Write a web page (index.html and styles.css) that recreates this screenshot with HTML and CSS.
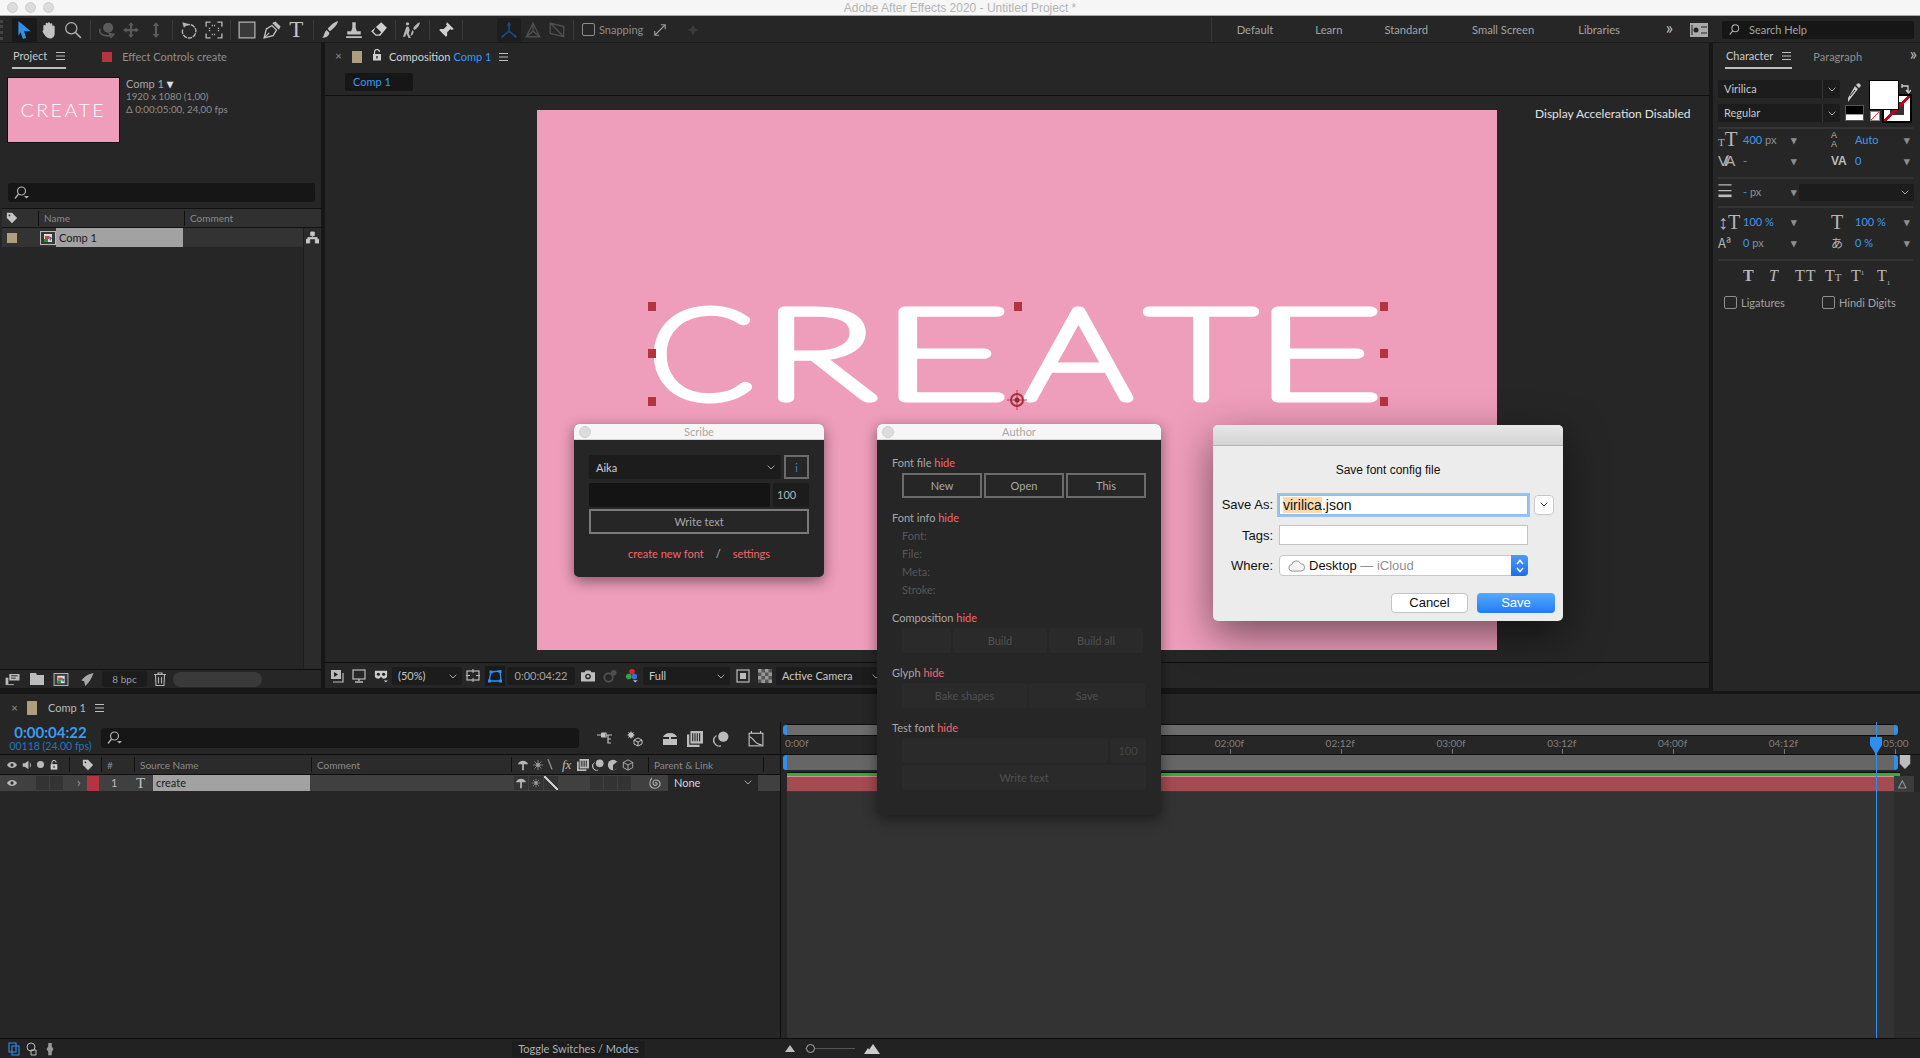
FILE: index.html
```html
<!DOCTYPE html>
<html lang="en">
<head>
<meta charset="utf-8">
<title>Adobe After Effects 2020 - Untitled Project *</title>
<link rel="stylesheet" href="styles.css">
</head>
<body>
<svg class="defs" aria-hidden="true">
  <symbol id="arrow" viewBox="0 0 16 16"><path d="M3 0l11 9H8l2 6-3 1-2-6-2 3z" fill="#2f8fee"/></symbol>
  <symbol id="hand" viewBox="0 0 16 16"><path d="M3 9V4.500a1 1 0 0 1 2 0V2.500a1 1 0 0 1 2 0V2a1 1 0 0 1 2 0v1a1 1 0 0 1 2 0v2a1 1 0 0 1 2 0v6c0 3-2 4.500-4 4.500-3 0-4-2-6.500-5.500-.8-1.200.5-2.200 1.500-1.500z" fill="#c2c2c2"/></symbol>
  <symbol id="zoom" viewBox="0 0 16 16"><circle cx="6.500" cy="6.500" r="5" fill="none" stroke="#b5b5b5" stroke-width="1.100"/><path d="M10 10l5 5" stroke="#b5b5b5" stroke-width="1.300"/></symbol>
  <symbol id="orbit" viewBox="0 0 16 16"><circle cx="9" cy="6" r="4.500" fill="#5a5a5a"/><path d="M2 7c-2 4 3 7 9 6l-1-2 4 1-3 3" fill="none" stroke="#5a5a5a" stroke-width="1.400"/></symbol>
  <symbol id="move" viewBox="0 0 16 16"><path d="M8 1l2.500 3H9v3h3V5.500L15 8l-3 2.500V9H9v3h1.500L8 15l-2.500-3H7V9H4v1.500L1 8l3-2.500V7h3V4H5.500z" fill="#5a5a5a"/></symbol>
  <symbol id="dolly" viewBox="0 0 16 16"><path d="M8 1l3 3.500H9v7h2L8 15l-3-3.500h2v-7H5z" fill="#5a5a5a"/></symbol>
  <symbol id="rotate" viewBox="0 0 16 16"><path d="M5 4a6 6 0 1 1-2.500 3" fill="none" stroke="#b5b5b5" stroke-width="1.200" stroke-dasharray="4 .8"/><path d="M2 1l5 1.500-3.500 3.500z" fill="#b5b5b5"/></symbol>
  <symbol id="region" viewBox="0 0 16 16"><path d="M1 5V1h4M11 1h4v4M15 11v4h-4M5 15H1v-4" fill="none" stroke="#b5b5b5" stroke-width="1.200"/><path d="M6 4h4M6 12h4M4 6v4M12 6v4" stroke="#b5b5b5" stroke-width="1.200" stroke-dasharray="1 1"/></symbol>
  <symbol id="rect" viewBox="0 0 16 16"><rect x="1" y="1" width="14" height="14" fill="#3a3a3a" stroke="#b5b5b5" stroke-width="1.100"/></symbol>
  <symbol id="pen" viewBox="0 0 16 16"><path d="M1 15l2-8 5-3 4 4-3 5z" fill="none" stroke="#c0c0c0" stroke-width="1.200"/><path d="M9 2l2-1 4 4-1 2zM1 15l4.500-4.500" fill="#c0c0c0" stroke="#c0c0c0"/></symbol>
  <symbol id="brush" viewBox="0 0 16 16"><path d="M15 0c0 3-4 7-7 9L6 7c2-3 6-6 9-7zM5 8l2.500 2.500C7 14 4 15 1 15c2-1 1.500-5 4-7z" fill="#c0c0c0"/></symbol>
  <symbol id="stamp" viewBox="0 0 16 16"><path d="M6.500 1h3v5l1 3H14v3H2V9h3.500l1-3zM1 13.500h14V15H1z" fill="#c0c0c0"/></symbol>
  <symbol id="eraser" viewBox="0 0 16 16"><path d="M10 1l5 5-6 7H5L1 9z" fill="#d0d0d0"/><path d="M5 5l5 5-2 2H5.500L3 9.500z" fill="#262626"/></symbol>
  <symbol id="puppet" viewBox="0 0 16 16"><circle cx="4" cy="2.500" r="1.500" fill="#b5b5b5"/><path d="M3 5l2 0 1 3-1 3 2 4H5l-2-4 .5-2L2 14H0l2-6zM15 1c0 3-3 6-5 7L9 6.500c1.500-2.500 4-5 6-5.500zM8.500 8l1 1.500C9 12 8 13 6.500 13c1-1 .5-3 2-5z" fill="#b5b5b5"/></symbol>
  <symbol id="pin" viewBox="0 0 16 16"><path d="M9 1l6 6-2 1-1-1-3 3 0 3-1 1-3-3-4 4 4-4-3-3 1-1 3 0 3-3-1-1z" fill="#d0d0d0"/></symbol>
  <symbol id="axis" viewBox="0 0 16 16"><path d="M8 1v8M8 9l-6 5M8 9l6 5" stroke="currentColor" stroke-width="1.400" fill="none"/><path d="M8 1l-2 3h4zM1 15l1-3 2 2zM15 15l-3-1 2-2z" fill="currentColor"/></symbol>
  <symbol id="axis2" viewBox="0 0 16 16"><path d="M8 2l6 12H2zM8 2v7M2 14l6-5 6 5" stroke="currentColor" stroke-width="1.200" fill="none"/></symbol>
  <symbol id="axis3" viewBox="0 0 16 16"><path d="M2 2l12 3v9L2 11zM2 2l12 12" stroke="currentColor" stroke-width="1.200" fill="none"/></symbol>
  <symbol id="snap1" viewBox="0 0 16 16"><path d="M2 14L14 2M9 2h5v5M2 9v5h5" stroke="#9a9a9a" stroke-width="1.300" fill="none"/></symbol>
  <symbol id="snap2" viewBox="0 0 16 16"><path d="M8 2l2 4 4 2-4 2-2 4-2-4-4-2 4-2z" fill="#3c3c3c"/></symbol>
  <symbol id="menu" viewBox="0 0 9 8"><path d="M0 .5h9M0 4h9M0 7.500h9" stroke="#bdbdbd" stroke-width="1"/></symbol>
  <symbol id="lock" viewBox="0 0 10 12"><path d="M2.500 5V3a2.500 2.500 0 0 1 5 0" fill="none" stroke="#d0d0d0" stroke-width="1.200"/><rect x="1" y="5" width="8" height="6.500" fill="#d0d0d0"/><rect x="4.300" y="7" width="1.400" height="2.500" fill="#262626"/></symbol>
  <symbol id="search" viewBox="0 0 16 14"><circle cx="7.500" cy="5" r="4" fill="none" stroke="#b0b0b0" stroke-width="1.200"/><path d="M4.500 8L1 12.500" stroke="#b0b0b0" stroke-width="1.300"/><path d="M10 10h5l-2.500 2.500z" fill="#b0b0b0"/></symbol>
  <symbol id="searchp" viewBox="0 0 14 14"><circle cx="8.500" cy="5" r="4" fill="none" stroke="#b0b0b0" stroke-width="1.200"/><path d="M5.500 8L2 12.500" stroke="#b0b0b0" stroke-width="1.300"/></symbol>
  <symbol id="tag" viewBox="0 0 14 14"><path d="M1 1h6l6 6-6 6-6-6z" fill="#c4c4c4"/><circle cx="4" cy="4" r="1" fill="#2e2e2e"/></symbol>
  <symbol id="flow" viewBox="0 0 14 14"><path d="M5 1h4v4H5zM0 9h4v4H0zM10 9h4v4h-4zM7 5v2M2 9V7h10v2" fill="#c8c8c8" stroke="#c8c8c8" stroke-width=".800"/></symbol>
  <symbol id="compic" viewBox="0 0 16 14"><rect x=".500" y=".500" width="15" height="13" fill="#3a3a3a" stroke="#bbb"/><rect x="4" y="3" width="8" height="8" fill="#ddd"/><path d="M5 5h4v3H5z" fill="#c43"/><path d="M9 5l3 2-2 3z" fill="#2364c4"/><path d="M4 8h4v3H4z" fill="#2a8f3a"/></symbol>
  <symbol id="interp" viewBox="0 0 16 14"><path d="M0 5h3v7H0zM4 1h11v7H4z" fill="#bbb"/><path d="M6 3h7M6 5.500h5M0 13h10" stroke="#262626" stroke-width="1"/><path d="M0 12.500h9" stroke="#bbb"/></symbol>
  <symbol id="folder" viewBox="0 0 14 12"><path d="M0 2V0h6l1 2h7v10H0z" fill="#bcbcbc"/></symbol>
  <symbol id="rocket" viewBox="0 0 14 14"><path d="M14 0C9 1 5 3 1 8l3 1 1 5c4-3 7-8 9-14z" fill="#a8a8a8"/></symbol>
  <symbol id="trash" viewBox="0 0 12 14"><path d="M0 2.500h12M4 2.500V1h4v1.500M1.500 3l.5 10.500h8L10.500 3M4.500 5v6.500M7.500 5v6.500" fill="none" stroke="#b5b5b5" stroke-width="1.100"/></symbol>
  <symbol id="prev" viewBox="0 0 14 14"><rect x="1" y="1" width="10" height="9" fill="#bbb"/><path d="M4 3l4 2.500L4 8z" fill="#222"/><path d="M13 4v9H3" fill="none" stroke="#bbb" stroke-width="1.200"/></symbol>
  <symbol id="monitor" viewBox="0 0 14 14"><rect x="1" y="1" width="12" height="9" fill="none" stroke="#bbb" stroke-width="1.200"/><path d="M7 10v2M3 13h8" stroke="#bbb" stroke-width="1.400"/></symbol>
  <symbol id="mask" viewBox="0 0 16 14"><path d="M1 1h14v6c0 2-2 3-4 3-1.500 0-2-2-3-2s-1.500 2-3 2c-2 0-4-1-4-3z" fill="#ccc"/><circle cx="5" cy="5" r="1.800" fill="#222"/><circle cx="11" cy="5" r="1.800" fill="#222"/><path d="M11 12h5l-2.500 2z" fill="#ccc"/></symbol>
  <symbol id="safe" viewBox="0 0 14 14"><rect x="1" y="2" width="12" height="9" fill="none" stroke="#bbb" stroke-width="1.200"/><path d="M7 0v4M7 9v4M0 6.500h4M10 6.500h4" stroke="#bbb"/></symbol>
  <symbol id="maskb" viewBox="0 0 14 14"><path d="M3 3l9-1 1 10H1z" fill="none" stroke="#2f8fee" stroke-width="1.300"/><rect x="1.500" y="1.500" width="3" height="3" fill="#2f8fee"/><rect x="10.500" y="1" width="3" height="3" fill="#2f8fee"/><rect x="0" y="10.500" width="3" height="3" fill="#2f8fee"/><rect x="11" y="10.500" width="3" height="3" fill="#2f8fee"/></symbol>
  <symbol id="camera" viewBox="0 0 15 12"><path d="M0 2h4l1-2h5l1 2h4v10H0z" fill="#bdbdbd"/><circle cx="7.500" cy="6.500" r="3" fill="#262626"/><circle cx="7.500" cy="6.500" r="1.500" fill="#bdbdbd"/></symbol>
  <symbol id="camdim" viewBox="0 0 15 14"><circle cx="6" cy="8.500" r="4.500" fill="none" stroke="#4f4f4f" stroke-width="2"/><circle cx="11.500" cy="3.500" r="3" fill="#4f4f4f"/></symbol>
  <symbol id="rgb" viewBox="0 0 14 15"><circle cx="7" cy="3" r="3" fill="#e0202a"/><circle cx="3.500" cy="8" r="3" fill="#2fa83a"/><circle cx="9.500" cy="8" r="3" fill="#2f6fe8"/><path d="M8 12h5l-2.500 2.500z" fill="#bbb"/></symbol>
  <symbol id="frame" viewBox="0 0 14 14"><rect x="1" y="1" width="12" height="12" fill="none" stroke="#bbb" stroke-width="1.200"/><rect x="4" y="4" width="6" height="6" fill="#bbb"/></symbol>
  <symbol id="checker" viewBox="0 0 14 14"><rect width="14" height="14" fill="#555"/><path d="M0 0h3.500v3.500H0zM7 0h3.500v3.500H7zM3.500 3.500H7V7H3.500zM10.500 3.500H14V7h-3.500zM0 7h3.500v3.500H0zM7 7h3.500v3.500H7zM3.500 10.500H7V14H3.500zM10.500 10.500H14V14h-3.500z" fill="#999"/></symbol>
  <symbol id="chev" viewBox="0 0 8 5"><path d="M.7.7L4 4l3.300-3.300" fill="none" stroke="currentColor" stroke-width="1"/></symbol>
  <symbol id="eye" viewBox="0 0 14 10"><path d="M0 5c3-5.500 11-5.500 14 0-3 5.500-11 5.500-14 0z" fill="#bbb"/><circle cx="7" cy="5" r="2.300" fill="#2e2e2e"/></symbol>
  <symbol id="speaker" viewBox="0 0 12 14"><path d="M0 4.500h3L8 1v12L3 9.500H0zM10 3c2 2 2 6 0 8" fill="#bbb"/></symbol>
  <symbol id="ttree" viewBox="0 0 16 14"><path d="M0 3h5M5 1h4v4H5zM9 3h6M11 3v8h3M11 7h3" stroke="#c0c0c0" stroke-width="1.200" fill="none"/><rect x="4" y="1" width="4" height="4" fill="#c0c0c0"/></symbol>
  <symbol id="draft" viewBox="0 0 16 16"><path d="M4 0l1 2 2-1-1 2 2 1-2 1 1 2-2-1-1 2-1-2-2 1 1-2-2-1 2-1-1-2 2 1z" fill="#c0c0c0"/><path d="M11 7l4 2v4l-4 2-4-2V9zM7 9l4 2 4-2M11 11v4" fill="none" stroke="#c0c0c0"/></symbol>
  <symbol id="shy" viewBox="0 0 16 14"><path d="M8 1c4 0 6 2 7 4H9v2h6v6H1V7h6V5H1c1-2 3-4 7-4z" fill="#c0c0c0"/></symbol>
  <symbol id="film" viewBox="0 0 14 14"><rect x="3" y="0" width="11" height="11" fill="#bbb"/><path d="M5 2v7M7 2v7M9 2v7M11 2v7" stroke="#2a2a2a"/><rect x="0" y="3" width="2" height="11" fill="#bbb"/><rect x="0" y="12" width="11" height="2" fill="#bbb"/></symbol>
  <symbol id="motion" viewBox="0 0 14 14"><circle cx="9" cy="5" r="4.500" fill="#bbb"/><path d="M3 4a5 5 0 0 0 4 9M1 6a5 5 0 0 0 3 7" fill="none" stroke="#bbb"/></symbol>
  <symbol id="graph" viewBox="0 0 14 14"><rect x="1" y="2" width="12" height="11" fill="none" stroke="#c0c0c0"/><path d="M1 5c4 0 4 7 11 7M3 0v2M11 0v2" stroke="#c0c0c0" fill="none"/></symbol>
  <symbol id="half" viewBox="0 0 14 14"><circle cx="7" cy="7" r="6" fill="#bbb"/><path d="M7 7l5-4a6 6 0 0 1-5 10z" fill="#2e2e2e"/></symbol>
  <symbol id="cube" viewBox="0 0 14 14"><path d="M7 1l5.500 3v6L7 13l-5.500-3V4zM1.500 4L7 7l5.500-3M7 7v6" fill="none" stroke="#bbb"/></symbol>
  <symbol id="star" viewBox="0 0 12 12"><path d="M6 1v10M1 6h10M2.500 2.500l7 7M9.500 2.500l-7 7" stroke="#999" stroke-width=".8"/><circle cx="6" cy="6" r="2" fill="#999"/></symbol>
  <symbol id="spiral" viewBox="0 0 14 14"><path d="M7 7c1-1 2 0 2 1 0 2-4 2-4-1 0-4 6-4 7 0 1 4-4 6-7 5C1 11 1 5 4 2" fill="none" stroke="#aaa" stroke-width="1.100"/></symbol>
  <symbol id="cloud" viewBox="0 0 18 14"><path d="M4.500 13a3.500 3.500 0 0 1-.5-7 5 5 0 0 1 9.500-1 4 4 0 0 1 .5 8z" fill="#f5f5f5" stroke="#8f8f8f"/></symbol>
  <symbol id="updn" viewBox="0 0 8 14"><path d="M1 5l3-3.500L7 5M1 9l3 3.500L7 9" fill="none" stroke="#fff" stroke-width="1.500"/></symbol>
  <symbol id="drop" viewBox="0 0 14 20"><path d="M13 1c1 1 1 2 0 3l-1 1-3-3 1-1c1-1 2-1 3 0zM8 3l3 3-7 9-3 4 0-4z" fill="#c8c8c8"/><path d="M3 13l5-6" stroke="#262626"/></symbol>
  <symbol id="swap" viewBox="0 0 10 12"><path d="M1 3h6v6M5 7l2.500 3L10 7M1 1v4" fill="none" stroke="#ccc" stroke-width="1.300"/></symbol>
  <symbol id="lines" viewBox="0 0 15 16"><path d="M0 1h15M0 7.500h15" stroke="#bbb" stroke-width="1.500"/><path d="M0 12h15v3H0z" fill="#bbb"/></symbol>
  <symbol id="panel-ic" viewBox="0 0 18 14"><rect width="18" height="14" fill="#aaa"/><circle cx="6" cy="7" r="2.500" fill="#222"/><path d="M11 4h6M11 10h6M2 2v10" stroke="#222"/></symbol>
  <symbol id="mt" viewBox="0 0 14 12"><path d="M7 1C4 1 2 3 1 5h5v7h2V5h5c-1-2-3-4-6-4z" fill="#b5b5b5"/></symbol>
  <symbol id="anchor" viewBox="0 0 20 20"><path d="M10 0v20M0 10h20" stroke="#c43a3a"/><circle cx="10" cy="10" r="6" fill="none" stroke="#a8323c" stroke-width="2"/><circle cx="10" cy="10" r="2.500" fill="#8a2a33"/></symbol>
  <symbol id="togl1" viewBox="0 0 12 14"><path d="M1 1h7v9H1zM4 4h7v9H4z" fill="none" stroke="#2f8fee" stroke-width="1.100"/></symbol>
  <symbol id="togl2" viewBox="0 0 12 14"><circle cx="5" cy="5" r="4" fill="none" stroke="#bbb"/><path d="M5 8h5v5H5z" fill="none" stroke="#bbb"/></symbol>
  <symbol id="togl3" viewBox="0 0 12 16"><path d="M4 1h4v4l2 3-2 3v4H4v-4L2 8l2-3z" fill="#999"/></symbol>
  <symbol id="mount1" viewBox="0 0 12 8"><path d="M6 0l5 7H1z" fill="#bbb"/></symbol>
  <symbol id="mount2" viewBox="0 0 16 10"><path d="M9 0l7 10H2zM4 4l4 6H0z" fill="#ccc"/></symbol>
  <symbol id="marker" viewBox="0 0 12 16"><path d="M0 0h12v10l-6 6-6-6z" fill="#bcbcbc"/></symbol>
  <symbol id="head" viewBox="0 0 12 18"><path d="M0 0h12v8l-5 8v2H5v-2L0 8z" fill="#2f8fee"/></symbol>
</svg>

<div class="app">
  <header class="titlebar">
    <div class="lights"><i class="light"></i><i class="light"></i><i class="light"></i></div>
    <span class="title">Adobe After Effects 2020 - Untitled Project *</span>
  </header>

  <nav class="toolbar">
    <span class="grip"></span>
    <span class="tool active"><svg class="ic16"><use href="#arrow"/></svg></span>
    <span class="tool"><svg class="ic16"><use href="#hand"/></svg></span>
    <span class="tool"><svg class="ic16"><use href="#zoom"/></svg></span>
    <span class="tsep"></span>
    <span class="tool"><svg class="ic16"><use href="#orbit"/></svg></span>
    <span class="tool"><svg class="ic16"><use href="#move"/></svg></span>
    <span class="tool"><svg class="ic16"><use href="#dolly"/></svg></span>
    <span class="tsep"></span>
    <span class="tool"><svg class="ic16"><use href="#rotate"/></svg></span>
    <span class="tool"><svg class="ic16"><use href="#region"/></svg></span>
    <span class="tsep"></span>
    <span class="tool"><svg class="ic16"><use href="#rect"/></svg></span>
    <span class="tool"><svg class="ic16"><use href="#pen"/></svg></span>
    <span class="tool tool-t">T</span>
    <span class="tsep"></span>
    <span class="tool"><svg class="ic16"><use href="#brush"/></svg></span>
    <span class="tool"><svg class="ic16"><use href="#stamp"/></svg></span>
    <span class="tool"><svg class="ic16"><use href="#eraser"/></svg></span>
    <span class="tsep"></span>
    <span class="tool"><svg class="ic16"><use href="#puppet"/></svg></span>
    <span class="tsep"></span>
    <span class="tool"><svg class="ic16"><use href="#pin"/></svg></span>
    <span class="tsep tsep-wide"></span>
    <span class="tool axis axis-on"><svg class="ic16"><use href="#axis"/></svg></span>
    <span class="tool axis"><svg class="ic16"><use href="#axis2"/></svg></span>
    <span class="tool axis"><svg class="ic16"><use href="#axis3"/></svg></span>
    <span class="tsep"></span>
    <label class="check snap"><i class="box"></i>Snapping</label>
    <span class="tool snapic"><svg class="ic14"><use href="#snap1"/></svg></span>
    <span class="tool snapic"><svg class="ic14"><use href="#snap2"/></svg></span>
    <span class="spacer"></span>
    <span class="workspaces">
      <span class="ws ws-default">Default</span>
      <span class="ws ws-learn">Learn</span>
      <span class="ws ws-standard">Standard</span>
      <span class="ws ws-small">Small Screen</span>
      <span class="ws ws-lib">Libraries</span>
    </span>
    <span class="more">»</span>
    <svg class="panelic"><use href="#panel-ic"/></svg>
    <span class="helpbox"><svg class="ic12"><use href="#searchp"/></svg>Search Help</span>
  </nav>

  <main class="panels">
    <section class="panel project">
      <div class="tabs">
        <span class="tab on">Project <svg class="menu"><use href="#menu"/></svg></span>
        <span class="swatch red"></span>
        <span class="tab dim">Effect Controls create</span>
      </div>
      <div class="meta">
        <div class="thumb"><span class="thumbtext">CREATE</span></div>
        <div class="metatext">
          <p class="metaname">Comp 1 <b class="tri">▾</b></p>
          <p>1920 x 1080 (1,00)</p>
          <p>Δ 0:00:05:00, 24,00 fps</p>
        </div>
      </div>
      <div class="search projsearch"><svg class="ic-s"><use href="#search"/></svg></div>
      <div class="listhead">
        <svg class="ic12 tagic"><use href="#tag"/></svg>
        <span class="cell cell-name">Name</span>
        <span class="cell cell-comment">Comment</span>
      </div>
      <div class="listbody">
        <div class="listcol">
          <div class="listrow">
            <span class="swatch tan rowsw"></span>
            <svg class="compic"><use href="#compic"/></svg>
            <span class="namecell">Comp 1</span>
          </div>
        </div>
        <div class="listscroll"><svg class="ic12 flowic"><use href="#flow"/></svg></div>
      </div>
      <div class="projfoot">
        <svg class="fi fi-a"><use href="#interp"/></svg>
        <svg class="fi fi-b"><use href="#folder"/></svg>
        <svg class="fi fi-c"><use href="#compic"/></svg>
        <svg class="fi fi-d"><use href="#rocket"/></svg>
        <span class="bpc">8 bpc</span>
        <svg class="fi fi-e"><use href="#trash"/></svg>
        <span class="pill"></span>
      </div>
    </section>

    <section class="panel comp">
      <div class="tabs comptabs">
        <span class="x">×</span>
        <span class="swatch tan"></span>
        <svg class="lockic"><use href="#lock"/></svg>
        <span class="tab bright">Composition <em class="blue">Comp 1</em></span>
        <svg class="menu"><use href="#menu"/></svg>
      </div>
      <div class="subtabs"><span class="subtab">Comp 1</span></div>
      <div class="viewer">
        <div class="canvas">
          <svg class="art" viewBox="0 0 960 540"><text class="arttext" y="288"><tspan x="112" textLength="104" lengthAdjust="spacingAndGlyphs">C</tspan><tspan x="226" textLength="112" lengthAdjust="spacingAndGlyphs">R</tspan><tspan x="344" textLength="128" lengthAdjust="spacingAndGlyphs">E</tspan><tspan x="489" textLength="105" lengthAdjust="spacingAndGlyphs">A</tspan><tspan x="610" textLength="108" lengthAdjust="spacingAndGlyphs">T</tspan><tspan x="717" textLength="128" lengthAdjust="spacingAndGlyphs">E</tspan></text></svg>
          <i class="handle h-tl"></i><i class="handle h-tm"></i><i class="handle h-tr"></i>
          <i class="handle h-ml"></i><i class="handle h-mr"></i>
          <i class="handle h-bl"></i><i class="handle h-br"></i>
          <svg class="anchorpt"><use href="#anchor"/></svg>
        </div>
        <p class="accel">Display Acceleration Disabled</p>
      </div>
      <div class="viewbar">
        <span class="vslot"><svg class="ic14"><use href="#prev"/></svg></span>
        <span class="vslot"><svg class="ic14"><use href="#monitor"/></svg></span>
        <span class="vslot"><svg class="ic14"><use href="#mask"/></svg></span>
        <span class="vsel vsel-zoom">(50%)<svg class="chev"><use href="#chev"/></svg></span>
        <span class="vslot"><svg class="ic14"><use href="#safe"/></svg></span>
        <span class="vblue"><svg class="ic14"><use href="#maskb"/></svg></span>
        <span class="vtime">0:00:04:22</span>
        <span class="vslot"><svg class="ic14"><use href="#camera"/></svg></span>
        <span class="vslot"><svg class="ic14"><use href="#camdim"/></svg></span>
        <span class="vslot"><svg class="ic14"><use href="#rgb"/></svg></span>
        <span class="vsel vsel-full">Full<svg class="chev"><use href="#chev"/></svg></span>
        <span class="vslot"><svg class="ic14"><use href="#frame"/></svg></span>
        <span class="vslot"><svg class="ic14"><use href="#checker"/></svg></span>
        <span class="vsel vsel-cam">Active Camera<svg class="chev"><use href="#chev"/></svg></span>
      </div>
    </section>

    <section class="panel char">
      <div class="tabs chartabs">
        <span class="tab on">Character <svg class="menu"><use href="#menu"/></svg></span>
        <span class="tab dim para">Paragraph</span>
        <span class="more charmore">»</span>
      </div>
      <div class="fontblock">
        <div class="fontsels">
          <span class="fsel">Virilica<i class="fchev"><svg class="chev"><use href="#chev"/></svg></i></span>
          <span class="fsel">Regular<i class="fchev"><svg class="chev"><use href="#chev"/></svg></i></span>
        </div>
        <div class="colorbox">
          <svg class="dropper"><use href="#drop"/></svg>
          <span class="bw"></span>
          <span class="none-s"></span>
          <span class="strokebox"></span>
          <span class="fillbox"></span>
          <svg class="swapic"><use href="#swap"/></svg>
        </div>
      </div>
      <hr class="rule rule-a">
      <div class="mrow">
        <span class="metric"><span class="mi tt"><small>T</small>T</span><span class="mv"><em class="blue">400</em> px</span><b class="dn">▾</b></span>
        <span class="metric mr"><span class="mi lead">A<br>A</span><span class="mv"><em class="blue">Auto</em></span><b class="dn">▾</b></span>
      </div>
      <div class="mrow">
        <span class="metric"><span class="mi va">V/A</span><span class="mv">-</span><b class="dn">▾</b></span>
        <span class="metric mr"><span class="mi vab">VA</span><span class="mv"><em class="blue">0</em></span><b class="dn">▾</b></span>
      </div>
      <hr class="rule rule-b">
      <div class="mrow mrow-s">
        <span class="metric"><span class="mi"><svg class="ic14"><use href="#lines"/></svg></span><span class="mv"><em class="blue">-</em> px</span><b class="dn">▾</b></span>
        <span class="strokesel"><svg class="chev"><use href="#chev"/></svg></span>
      </div>
      <hr class="rule rule-c">
      <div class="mrow">
        <span class="metric"><span class="mi tb">↕T</span><span class="mv"><em class="blue">100 %</em></span><b class="dn">▾</b></span>
        <span class="metric mr"><span class="mi tb">T</span><span class="mv"><em class="blue">100 %</em></span><b class="dn">▾</b></span>
      </div>
      <div class="mrow">
        <span class="metric"><span class="mi aa">Aª</span><span class="mv"><em class="blue">0</em> px</span><b class="dn">▾</b></span>
        <span class="metric mr"><span class="mi aa">あ</span><span class="mv"><em class="blue">0 %</em></span><b class="dn">▾</b></span>
      </div>
      <hr class="rule rule-d">
      <div class="styles">
        <span class="sty bold">T</span><span class="sty ital">T</span><span class="sty caps">TT</span><span class="sty smc">T<small>T</small></span><span class="sty">T<sup>1</sup></span><span class="sty">T<sub>1</sub></span>
      </div>
      <div class="checks">
        <label class="check lig"><i class="box"></i>Ligatures</label>
        <label class="check"><i class="box"></i>Hindi Digits</label>
      </div>
    </section>
  </main>

  <section class="timeline">
    <div class="tl-tabs">
      <span class="x">×</span>
      <span class="swatch tan"></span>
      <span class="tab">Comp 1</span>
      <svg class="menu"><use href="#menu"/></svg>
    </div>
    <div class="tl-body">
      <div class="tl-left">
        <div class="tl-ctrl">
          <div class="tc"><span class="tc-time">0:00:04:22</span><span class="tc-frames">00118 (24.00 fps)</span></div>
          <div class="search tlsearch"><svg class="ic-s"><use href="#search"/></svg></div>
          <span class="tlic tlic-a"><svg class="ic16"><use href="#ttree"/></svg></span>
          <span class="tlic tlic-b"><svg class="ic16"><use href="#draft"/></svg></span>
          <span class="tlic tlic-c"><svg class="ic16"><use href="#shy"/></svg></span>
          <span class="tlic tlic-d"><svg class="ic16"><use href="#film"/></svg></span>
          <span class="tlic tlic-e"><svg class="ic16"><use href="#motion"/></svg></span>
          <span class="tlic tlic-f"><svg class="ic16"><use href="#graph"/></svg></span>
        </div>
        <div class="tl-head">
          <span class="col c-av"><svg class="ic10 sp"><use href="#eye"/></svg><svg class="ic10 sp"><use href="#speaker"/></svg><i class="dot"></i><svg class="ic10"><use href="#lock"/></svg></span>
          <span class="col c-tag"><svg class="ic12"><use href="#tag"/></svg></span>
          <span class="col c-num">#</span>
          <span class="col c-src">Source Name</span>
          <span class="col c-com">Comment</span>
          <span class="col c-sw">
            <svg class="ic12 swi"><use href="#mt"/></svg><svg class="ic12 swi"><use href="#star"/></svg><span class="swi sl">\</span><span class="swi fx">fx</span><svg class="ic12 swi"><use href="#film"/></svg><svg class="ic12 swi"><use href="#motion"/></svg><svg class="ic12 swi"><use href="#half"/></svg><svg class="ic12 swi"><use href="#cube"/></svg>
          </span>
          <span class="col c-par">Parent &amp; Link</span>
        </div>
        <div class="tl-row">
          <span class="r-av"><svg class="ic10"><use href="#eye"/></svg><i class="sq"></i><i class="sq"></i></span>
          <span class="r-chev">›</span>
          <span class="swatch red r-sw"></span>
          <span class="r-num">1</span>
          <span class="r-t">T</span>
          <span class="r-name">create</span>
          <span class="r-sws"><i class="sw-a"><svg class="ic12"><use href="#mt"/></svg></i><i class="sw-a"><svg class="ic10"><use href="#star"/></svg></i><i class="sw-a sl2"></i></span>
          <span class="r-sq"><i class="sq"></i><i class="sq"></i><i class="sq"></i></span>
          <svg class="ic14 r-sp"><use href="#spiral"/></svg>
          <span class="r-none">None<svg class="chev"><use href="#chev"/></svg></span>
        </div>
        <div class="tl-empty"></div>
      </div>
      <div class="tl-right">
        <div class="nav"><i class="nub nub-l"></i><span class="navbar"></span><i class="nub nub-r"></i></div>
        <div class="ruler">
          <span class="rl rl-0">0:00f</span>
          <span class="rl">02:00f</span>
          <span class="rl">02:12f</span>
          <span class="rl">03:00f</span>
          <span class="rl">03:12f</span>
          <span class="rl">04:00f</span>
          <span class="rl">04:12f</span>
          <span class="rl rl-e">05:00</span>
        </div>
        <div class="work"><i class="nub nub-l"></i><span class="workbar"></span><i class="nub nub-r"></i><svg class="markic"><use href="#marker"/></svg></div>
        <div class="green"></div>
        <div class="layerline"><span class="layerbar"></span><span class="layerend"><i class="fold">△</i></span></div>
        <div class="tl-lower"><span class="lowerend"></span></div>
        <span class="playhead"><svg class="headic"><use href="#head"/></svg></span>
      </div>
    </div>
    <footer class="tl-foot">
      <svg class="ic14 ft1"><use href="#togl1"/></svg>
      <svg class="ic14 ft2"><use href="#togl2"/></svg>
      <svg class="ic14 ft2"><use href="#togl3"/></svg>
      <span class="toggle">Toggle Switches / Modes</span>
      <svg class="mnt1"><use href="#mount1"/></svg>
      <span class="zoomslide"><i class="knob"></i></span>
      <svg class="mnt2"><use href="#mount2"/></svg>
    </footer>
  </section>
</div>

<div class="win scribe">
  <div class="wtitle"><i class="wlight"></i>Scribe</div>
  <div class="scribe-body">
    <div class="srow">
      <span class="ssel">Aika<svg class="chev"><use href="#chev"/></svg></span>
      <span class="sbtn-i">i</span>
    </div>
    <div class="srow">
      <span class="sinput"></span>
      <span class="snum">100</span>
    </div>
    <div class="sbtn">Write text</div>
    <p class="slinks"><a class="hide">create new font</a><span class="slash">/</span><a class="hide">settings</a></p>
  </div>
</div>

<div class="win author">
  <div class="wtitle"><i class="wlight"></i>Author</div>
  <div class="author-body">
    <p class="ah">Font file <a class="hide">hide</a></p>
    <div class="arow"><span class="abtn">New</span><span class="abtn">Open</span><span class="abtn">This</span></div>
    <p class="ah ah-info">Font info <a class="hide">hide</a></p>
    <p class="ainfo">Font:</p>
    <p class="ainfo">File:</p>
    <p class="ainfo">Meta:</p>
    <p class="ainfo">Stroke:</p>
    <p class="ah ah-comp">Composition <a class="hide">hide</a></p>
    <div class="arow arow-d"><span class="adis a-w1"></span><span class="adis a-w2">Build</span><span class="adis a-w2">Build all</span></div>
    <p class="ah ah-next">Glyph <a class="hide">hide</a></p>
    <div class="arow arow-d"><span class="adis a-w3">Bake shapes</span><span class="adis a-w4">Save</span></div>
    <p class="ah ah-next">Test font <a class="hide">hide</a></p>
    <div class="arow arow-d"><span class="adis a-w5"></span><span class="adis a-w6">100</span></div>
    <div class="arow arow-d arow-t"><span class="adis a-w7">Write text</span></div>
  </div>
</div>

<div class="dialog">
  <div class="dtitle"></div>
  <p class="dhead">Save font config file</p>
  <div class="dform">
    <span class="dlabel">Save As:</span>
    <span class="dfield focus"><mark class="sel">virilica</mark>.json</span>
    <span class="dexpand"><svg class="chev"><use href="#chev"/></svg></span>
    <span class="dlabel">Tags:</span>
    <span class="dfield"></span>
    <span></span>
    <span class="dlabel">Where:</span>
    <span class="dpopup"><svg class="cloud"><use href="#cloud"/></svg>Desktop<span class="dgray"> — iCloud</span><i class="dstep"><svg class="updn"><use href="#updn"/></svg></i></span>
    <span></span>
  </div>
  <div class="dbtns"><span class="dbtn">Cancel</span><span class="dbtn primary">Save</span></div>
</div>
</body>
</html>
```

FILE: styles.css
```css
* { box-sizing: border-box; }
html, body { margin: 0; height: 100%; overflow: hidden; }
body { position: relative; width: 1920px; height: 1058px; background: #161616; color: #a3a3a3; font: 11px/1.2 Lato, "Open Sans", sans-serif; }
p { margin: 0; }
em { font-style: normal; }
i, b { font-style: normal; }
.defs { position: absolute; width: 0; height: 0; }
.blue { color: #3a9bf0; }
.app { display: flex; flex-direction: column; width: 1920px; height: 1058px; }

/* title bar */
.titlebar { position: relative; flex: 0 0 16px; background: #f6f6f6; border-bottom: 1px solid #a9a9a9; display: flex; align-items: center; justify-content: center; }
.lights { position: absolute; left: 7px; top: 2px; display: flex; gap: 7px; }
.light { width: 11px; height: 11px; border-radius: 50%; background: #dcdcdc; border: 1px solid #cfcfcf; }
.title { color: #b4b4b4; font: 12px "Liberation Sans", sans-serif; }

/* toolbar */
.toolbar { flex: 0 0 26px; display: flex; align-items: center; padding-top: 1px; background: #262626; border-bottom: 1px solid #1a1a1a; }
.grip { width: 12px; height: 20px; border-left: 3px dotted #444; }
.tool { width: 24.500px; height: 24px; display: flex; align-items: center; justify-content: center; color: #b5b5b5; }
.tool .ic16 { width: 18px; height: 18px; }
.tool.active { background: #1a1a1a; border-radius: 2px; }
.tool-t { font: 23px/24px "Liberation Serif", serif; color: #c4c4c4; }
.tsep { width: 9px; height: 24px; position: relative; }
.tsep::after { content: ""; position: absolute; left: 4px; top: 2px; width: 1px; height: 20px; background: #383838; }
.tsep-wide { width: 39px; }
.ic16 { width: 16px; height: 16px; }
.ic14 { width: 14px; height: 14px; }
.ic12 { width: 12px; height: 12px; }
.ic10 { width: 10px; height: 10px; }
.axis { color: #4f4f4f; width: 24px; }
.axis-on { color: #1d4c80; background: #1e1e1e; border-radius: 2px; }
.check { display: inline-flex; align-items: center; gap: 4px; color: #a3a3a3; }
.box { width: 13px; height: 13px; border: 1.500px solid #8d8d8d; border-radius: 2px; }
.snap { margin-left: 4px; color: #8d8d8d; }
.snapic { width: 33px; }
.spacer { flex: 1; }
.workspaces { display: flex; align-self: stretch; align-items: center; width: 455px; height: 25px; border-left: 1px solid #383838; font-size: 11.200px; }
.ws { color: #a3a3a3; }
.ws-default { margin-left: 25px; }
.ws-learn { margin-left: 42px; }
.ws-standard { margin-left: 42px; }
.ws-small { margin-left: 44px; }
.ws-lib { margin-left: 44px; }
.more { color: #c0c0c0; font-size: 17px; line-height: 14px; }
.toolbar > .more { margin-right: 17px; margin-top: -4px; }
.panelic { width: 18px; height: 14px; margin-right: 14px; }
.helpbox { display: flex; align-items: center; gap: 9px; width: 192px; height: 18px; margin-right: 6px; padding-left: 6px; background: #161616; border-radius: 2px; color: #a3a3a3; }

/* panels */
.panels { flex: 0 0 648px; display: grid; grid-template-columns: 321px 1fr 207px; column-gap: 4px; background: #161616; }
.panel { background: #262626; display: flex; flex-direction: column; min-height: 0; }
.project, .comp { border-bottom: 3px solid #161616; }
.tabs { flex: 0 0 29px; display: flex; align-items: center; position: relative; padding-bottom: 2px; }
.tab { display: inline-flex; align-items: center; gap: 9px; }
.tab.on { color: #c8c8c8; height: 25px; border-bottom: 2px solid #bdbdbd; padding: 0 1px; margin-left: 12px; }
.tab.dim { color: #8f8f8f; }
.tab.bright { color: #d2d2d2; gap: 3px; }
.menu { width: 9px; height: 8px; }
.swatch { display: inline-block; width: 10px; height: 10px; }
.swatch.red { background: #b5343f; }
.swatch.tan { background: #ad9f7e; }
.project .tabs .swatch { margin-left: 36px; margin-right: 10px; }

.meta { flex: 0 0 72px; display: flex; padding: 5px 0 0 7px; }
.thumb { width: 113px; height: 66px; background: #ee9dba; border: 1px solid #111; display: flex; align-items: center; justify-content: center; }
.thumbtext { color: #fff; font: 300 17px/1 Lato, sans-serif; letter-spacing: 2.200px; transform: scaleX(1.150); }
.metatext { margin-left: 6px; color: #8f8f8f; line-height: 13px; font-size: 9.800px; }
.metaname { color: #a8a8a8; font-size: 11px; }
.tri { color: #e0e0e0; font-size: 12px; }

.search { background: #161616; border-radius: 3px; display: flex; align-items: center; }
.ic-s { width: 16px; height: 14px; margin-left: 6px; }
.projsearch { height: 19px; margin: 39px 6px 6px 8px; }
.listhead { flex: 0 0 20px; margin-left: 2px; display: flex; align-items: center; background: #303030; border-top: 1px solid #111; border-bottom: 1px solid #111; color: #8a8a8a; font-size: 10px; }
.tagic { margin-left: 4px; }
.cell { border-left: 1px solid #111; height: 15px; line-height: 15px; padding-left: 5px; }
.cell-name { margin-left: 20px; width: 146px; }
.cell-comment { width: 130px; padding-left: 5px; }
.listbody { flex: 1; display: flex; min-height: 0; }
.listcol { flex: 1; }
.listrow { height: 19px; margin-left: 2px; background: #333; display: flex; align-items: center; }
.rowsw { margin-left: 5px; }
.compic { width: 16px; height: 14px; margin-left: 23px; }
.namecell { width: 127px; height: 19px; padding-left: 3px; line-height: 19px; color: #1a1a1a; background: #a2a2a2; }
.listscroll { width: 18px; border-left: 1px solid #1e1e1e; background: #2b2b2b; display: flex; justify-content: center; padding-top: 3px; }
.flowic { width: 13px; height: 13px; }
.projfoot { flex: 0 0 19px; display: flex; align-items: center; border-top: 1px solid #0e0e0e; }
.fi { width: 16px; height: 13px; }
.fi-a { margin-left: 5px; }
.fi-b { margin-left: 9px; width: 14px; height: 12px; }
.fi-c { margin-left: 9px; }
.fi-d { margin-left: 10px; }
.bpc { margin-left: 7px; width: 45px; height: 16px; line-height: 16px; text-align: center; background: #1c1c1c; border-radius: 3px; color: #9a9a9a; font-size: 10px; }
.fi-e { margin-left: 7px; width: 12px; height: 14px; }
.pill { margin-left: 7px; width: 89px; height: 15px; background: #3a3a3a; border-radius: 8px; }

/* comp panel */
.comptabs .x { margin-left: 10px; }
.x { color: #8a8a8a; font-size: 12px; width: 14px; }
.comptabs .swatch { margin-left: 3px; height: 12px; }
.lockic { width: 10px; height: 12px; margin: -3px 7px 0 10px; }
.comptabs .menu { margin-left: 8px; }
.subtabs { flex: 0 0 24px; padding-left: 20px; border-bottom: 1px solid #0e0e0e; }
.subtab { display: block; width: 68px; height: 18px; line-height: 18px; padding-left: 8px; margin-top: 1px; color: #3a9bf0; background: #161616; border-radius: 2px; }
.viewer { flex: 0 0 567px; display: flex; align-items: flex-start; padding: 11px 0 0 212px; border-bottom: 1px solid #0e0e0e; }
.canvas { position: relative; flex: 0 0 960px; height: 540px; margin-top: 3px; background: #ee9dba; }
.art { position: absolute; left: 0; top: 0; width: 960px; height: 540px; }
.arttext { font: 100 124px Lato, sans-serif; fill: #fff; stroke: #fff; stroke-width: 9px; stroke-linejoin: round; }
.handle { position: absolute; width: 8px; height: 9px; background: #b4343e; }
.h-tl { left: 111px; top: 192px; }
.h-tm { left: 477px; top: 192px; }
.h-tr { left: 843px; top: 192px; }
.h-ml { left: 111px; top: 239px; }
.h-mr { left: 843px; top: 239px; }
.h-bl { left: 111px; top: 287px; }
.h-br { left: 843px; top: 287px; }
.anchorpt { position: absolute; left: 470px; top: 280px; width: 20px; height: 20px; }
.accel { margin: 0 0 0 38px; color: #e2e2e2; font-size: 12px; white-space: nowrap; }
.viewbar { flex: 1; display: flex; align-items: center; padding-left: 1px; }
.vslot { width: 22px; display: flex; justify-content: center; }
.vsel { position: relative; height: 18px; line-height: 18px; padding-left: 6px; background: #1c1c1c; border-radius: 2px; color: #c8c8c8; }
.vsel .chev { position: absolute; right: 5px; top: 7px; }
.chev { width: 8px; height: 5px; color: #a8a8a8; }
.vsel-zoom { width: 70px; }
.vblue { width: 20px; height: 20px; background: #1a1a1a; display: flex; align-items: center; justify-content: center; margin-left: 1px; }
.vtime { width: 68px; height: 18px; line-height: 18px; margin: 0 2px; text-align: center; background: #1c1c1c; border-radius: 2px; color: #a3a3a3; }
.vsel-full { width: 87px; margin-right: 2px; }
.vsel-cam { width: 109px; }

/* character */
.chartabs .tab.on { margin-left: 12px; }
.para { margin-left: 21px; }
.charmore { position: absolute; right: 3px; top: 4px; }
.fontblock { display: flex; padding: 8px 0 0 5px; flex: 0 0 55px; }
.fontsels { display: flex; flex-direction: column; gap: 6px; }
.fsel { position: relative; width: 122px; height: 18px; line-height: 18px; padding-left: 6px; background: #1c1c1c; border-radius: 2px; color: #c8c8c8; }
.fchev { position: absolute; right: 0; top: 0; width: 18px; height: 18px; border-left: 1px solid #333; display: flex; align-items: center; justify-content: center; }
.colorbox { position: relative; flex: 1; }
.dropper { position: absolute; left: 7px; top: 3px; width: 14px; height: 20px; }
.bw { position: absolute; left: 5px; top: 25px; width: 19px; height: 16px; background: linear-gradient(#000 0 55%, #999 55% 65%, #fff 65%); border: 1px solid #555; }
.none-s { position: absolute; left: 30px; top: 31px; width: 10px; height: 10px; background: linear-gradient(135deg, #fff 44%, #d33 44% 56%, #fff 56%); border: 1px solid #888; }
.strokebox { position: absolute; left: 42px; top: 14px; width: 30px; height: 29px; background: linear-gradient(135deg, #fff 46%, #c4001a 46% 54%, #fff 54%); border: 2px solid #000; }
.strokebox::after { content: ""; position: absolute; left: 6px; top: 6px; width: 14px; height: 13px; background: linear-gradient(135deg, #333 42%, #c4001a 42% 58%, #333 58%); }
.fillbox { position: absolute; left: 29px; top: 0; width: 30px; height: 30px; background: #fff; border: 1px solid #000; }
.swapic { position: absolute; left: 61px; top: 3px; width: 10px; height: 12px; }
.rule { flex: none; width: 195px; height: 2px; margin: 0 0 0 5px; border: 0; background: #333; }
.rule-b { margin-top: 6px; margin-bottom: 3.500px; }
.rule-c { margin-top: 4.500px; margin-bottom: 3px; }
.rule-d { margin-top: 6px; }
.mrow { display: flex; align-items: center; height: 21px; padding-left: 5px; }
.mrow-s { height: 19px; }
.metric { display: flex; align-items: center; width: 104px; }
.metric.mr { width: 96px; }
.mi { width: 25px; color: #b5b5b5; font: 15px/1 "Liberation Serif", serif; flex: none; }
.mr .mi { width: 33px; padding-left: 9px; }
.mv { width: 48px; color: #8f8f8f; flex: none; }
.mr .mv { width: 49px; }
.dn { color: #8f8f8f; font-size: 11px; }
.tt { font-size: 21px; }
.tt small { font-size: 11px; }
.tb { font-size: 20px; }
.lead { font: 9px/9px "Liberation Sans", sans-serif; }
.va { font: 15px/1 "Liberation Sans", sans-serif; letter-spacing: -3.500px; }
.vab { font: bold 12px/1 "Liberation Sans", sans-serif; }
.mi.vab { color: #bbb; }
.aa { font: 13px/1 "Noto Sans CJK JP", sans-serif; }
.mr .aa { font-size: 12px; }
.strokesel { display: flex; align-items: center; justify-content: flex-end; width: 115px; height: 17px; margin-left: -23px; padding-right: 5px; background: #1c1c1c; border-radius: 2px; }
.styles { flex: 0 0 30px; display: flex; align-items: center; padding-left: 30px; color: #b8b8b8; font: 16px/1 "Liberation Serif", serif; }
.sty { width: 26px; }
.sty small { font-size: 11px; }
.sty sup, .sty sub { font-size: 7px; line-height: 0; }
.bold { font-weight: 700; }
.ital { font-style: italic; }
.caps { letter-spacing: 1px; width: 30px; }
.checks { display: flex; padding: 5px 0 0 11px; color: #909090; }
.lig { width: 98px; }

/* timeline */
.timeline { flex: 1; margin-top: 3px; background: #262626; display: flex; flex-direction: column; min-height: 0; }
.tl-tabs { flex: 0 0 28px; display: flex; align-items: center; padding-left: 11px; }
.tl-tabs .swatch { margin-left: 2px; height: 14px; }
.tl-tabs .tab { margin-left: 11px; color: #b8b8b8; }
.tl-tabs .menu { margin-left: 9px; }
.tl-body { flex: 0 0 316px; display: flex; }
.tl-left { flex: 0 0 780px; display: flex; flex-direction: column; }
.tl-ctrl { flex: 0 0 32px; display: flex; align-items: flex-start; }
.tc { width: 101px; display: flex; flex-direction: column; align-items: center; padding-top: 2px; }
.tc-time { color: #3a9bf0; font: 700 15px/16px Lato, sans-serif; }
.tc-frames { color: #2a73b8; font-size: 10.500px; line-height: 13px; }
.tlsearch { width: 478px; height: 20px; margin-top: 6px; }
.tlic { width: 16px; height: 24px; margin-top: 5px; display: flex; align-items: center; justify-content: center; }
.tlic-a { margin-left: 18px; }
.tlic-b { margin-left: 14px; }
.tlic-c { margin-left: 19px; }
.tlic-d { margin-left: 9px; }
.tlic-e { margin-left: 10px; }
.tlic-f { margin-left: 19px; }
.tl-head { flex: 0 0 21px; display: flex; align-items: center; border-top: 1px solid #0e0e0e; border-bottom: 1px solid #0e0e0e; color: #8a8a8a; font-size: 10px; background: #2b2b2b; }
.col { display: flex; align-items: center; height: 15px; }
.col + .col { border-left: 1px solid #111; padding-left: 5px; }
.c-av { width: 69px; padding-left: 7px; gap: 5px; }
.dot { width: 7px; height: 7px; border-radius: 50%; background: #bbb; }
.c-tag { width: 32px; padding-left: 12px !important; }
.c-num { width: 33px; }
.c-src { width: 177px; }
.c-com { width: 200px; }
.c-sw { width: 137px; gap: 3px; }
.swi { flex: 0 0 12px; }
.sl { font-size: 13px; color: #bbb; }
.fx { font: italic 13px "Liberation Serif", serif; color: #bbb; }
.c-par { width: 116px; border-right: 1px solid #111; }
.tl-row { flex: 0 0 16px; display: flex; align-items: center; background: #404040; }
.r-av { width: 77px; display: flex; align-items: center; padding-left: 7px; }
.r-av .sq:first-of-type { margin-left: 19px; }
.sq { display: block; width: 13px; height: 14px; background: #333; margin-right: 1px; }
.r-chev { width: 10px; color: #999; font-size: 13px; }
.r-sw { width: 12px; height: 15px; }
.r-num { width: 37px; padding-left: 12px; color: #bdbdbd; }
.r-t { width: 13px; color: #c0c0c0; font: 15px/1 "Liberation Serif", serif; margin-right: 4px; }
.r-name { width: 157px; height: 16px; line-height: 15px; padding-left: 3px; color: #1a1a1a; background: #a2a2a2; }
.r-sws { display: flex; gap: 1px; margin-left: 204px; }
.sw-a { width: 14px; height: 14px; background: #333; display: flex; align-items: center; justify-content: center; }
.sl2 { background: linear-gradient(135deg, #333 46%, #ccc 46% 54%, #333 54%); transform: scaleX(-1); }
.r-sq { display: flex; margin-left: 32px; }
.r-sp { margin-left: 16px; }
.r-none { position: relative; width: 90px; height: 16px; line-height: 15px; margin-left: 6px; padding-left: 6px; color: #d8d8d8; background: #262626; }
.r-none .chev { position: absolute; right: 6px; top: 5px; }
.tl-empty { flex: 1; }
.tl-right { flex: 1; position: relative; display: flex; flex-direction: column; border-left: 1px solid #0e0e0e; }
.nav { flex: 0 0 14px; display: flex; align-items: flex-end; padding: 0 0 0 2px; }
.navbar { width: 1107px; height: 12px; background: #6c6c6c; border-top: 1px solid #0e0e0e; border-bottom: 1px solid #0e0e0e; }
.nub { display: block; width: 4px; height: 10px; margin-bottom: 1px; background: #2f8fee; border-radius: 3px 0 0 3px; }
.nub-r { border-radius: 0 3px 3px 0; }
.ruler { flex: 0 0 19px; position: relative; display: flex; padding-left: 4px; color: #7f7f7f; font-size: 10px; line-height: 12px; padding-top: 1px; border-bottom: 1px solid #0e0e0e; background: repeating-linear-gradient(90deg, #777 0 1px, transparent 1px 110.800px) 449px 13px / 100% 5px no-repeat; }
.rl { width: 110.800px; text-align: center; }
.rl-0 { width: 389px; text-align: left; }
.rl-e { width: 30px; margin-left: 42px; }
.work { flex: 0 0 16px; display: flex; padding: 0 0 1px 2px; }
.workbar { width: 1107px; height: 15px; background: #666; }
.work .nub { height: 15px; }
.markic { width: 12px; height: 14px; margin-left: 1px; }
.green { flex: 0 0 4px; width: 1113px; margin-left: 6px; background: #29b52f; border-top: 1px solid #0e0e0e; }
.layerline { flex: 0 0 16px; display: flex; }
.layerbar { width: 1107px; margin-left: 6px; background: #a64a52; border-top: 1px solid #d49098; border-bottom: 1px solid #3a3a3a; }
.layerend { width: 20px; color: #ccc; background: #3c3c3c; line-height: 14px; padding-left: 4px; }
.tl-lower { flex: 1; display: flex; justify-content: flex-end; background: #333; margin-left: 6px; }
.lowerend { width: 26px; background: #2c2c2c; }
.playhead { position: absolute; left: 1095px; top: 0; width: 1px; height: 100%; background: #2f8fee; }
.headic { position: absolute; left: -6px; top: 15px; width: 12px; height: 18px; }
.tl-foot { flex: 1; position: relative; display: flex; align-items: center; border-top: 1px solid #0e0e0e; background: #222; }
.ft1 { margin-left: 7px; }
.ft2 { margin-left: 4px; }
.toggle { margin-left: 455px; width: 133px; height: 16px; line-height: 16px; text-align: center; color: #b0b0b0; background: #1c1c1c; border-radius: 2px; }
.mnt1 { width: 12px; height: 8px; margin-left: 139px; }
.zoomslide { position: relative; width: 50px; height: 1px; margin-left: 9px; background: #555; }
.knob { position: absolute; left: 1px; top: -4px; width: 9px; height: 9px; border: 1.500px solid #aaa; border-radius: 50%; background: #222; }
.mnt2 { width: 16px; height: 10px; margin-left: 9px; }

/* floating windows */
.win { position: absolute; background: #262626; border-radius: 5px; box-shadow: 0 4px 14px rgba(0, 0, 0, .45); overflow: hidden; }
.wtitle { position: relative; height: 16px; background: #f6f6f6; border-bottom: 1px solid #d5d5d5; text-align: center; color: #a8a8a8; font: 11px/16px Lato, sans-serif; }
.wlight { position: absolute; left: 5px; top: 2px; width: 12px; height: 12px; border-radius: 50%; background: #dcdcdc; border: 1px solid #cfcfcf; }
.scribe { left: 574px; top: 424px; width: 250px; height: 153px; }
.scribe-body { padding: 15px 15px 0; display: flex; flex-direction: column; }
.srow { display: flex; justify-content: space-between; height: 24px; margin-bottom: 4px; }
.ssel { position: relative; width: 192px; height: 24px; line-height: 25px; padding-left: 7px; color: #d0d0d0; background: #1c1c1c; border-radius: 2px; }
.ssel .chev { position: absolute; right: 6px; top: 10px; }
.sbtn-i { width: 25px; height: 24px; line-height: 22px; text-align: center; color: #4a7ec0; border: 2px solid #6c6c6c; }
.sinput { width: 181px; background: #141414; border-radius: 2px; }
.snum { width: 36px; line-height: 24px; padding-left: 4px; background: #1c1c1c; color: #b5b5b5; border-radius: 2px; }
.sbtn { height: 25px; margin-top: -2px; line-height: 21px; text-align: center; color: #a8a8a8; border: 2px solid #7a7a7a; }
.slinks { margin-top: 13px; text-align: center; }
.hide { color: #f4666e; }
.slash { margin: 0 12px; color: #bbb; }
.author { left: 877px; top: 424px; width: 284px; height: 391px; }
.author-body { padding: 16px 15px 0; }
.ah { color: #a8a8a8; line-height: 14px; height: 14px; }
.ah-info { margin-top: 13px; }
.ah-comp { margin-top: 12px; }
.ah-next { margin-top: 13px; }
.arow { display: flex; gap: 2px; margin: 3px 0 0 10px; }
.abtn { width: 80px; height: 25px; line-height: 21px; text-align: center; color: #a8a8a8; border: 2px solid #6c6c6c; }
.ainfo { margin-left: 10px; height: 18px; line-height: 18px; color: #575757; }
.ah-info + .ainfo { margin-top: 2px; }
.arow-t { margin-top: 2px; }
.adis { display: block; height: 25px; line-height: 25px; text-align: center; color: #505050; background: #2a2a2a; border-radius: 2px; }
.a-w1 { width: 49px; }
.a-w2 { width: 94px; }
.a-w3 { width: 125px; }
.a-w4 { width: 116px; }
.a-w5 { width: 206px; }
.a-w6 { width: 36px; color: #444; }
.a-w7 { width: 244px; }

/* macOS dialog */
.dialog { position: absolute; left: 1213px; top: 425px; width: 350px; height: 196px; background: #ececec; border-radius: 5px; box-shadow: 0 14px 40px rgba(0, 0, 0, .5); overflow: hidden; color: #111; font: 13px/1 "Liberation Sans", sans-serif; }
.dtitle { height: 21px; background: linear-gradient(#e8e8e8, #d2d2d2); border-bottom: 1px solid #b4b4b4; }
.dhead { margin-top: 18px; text-align: center; font-size: 12px; }
.dform { display: grid; grid-template-columns: 60px 249px 26px; grid-template-rows: 21px 20px 21px; row-gap: 10px; column-gap: 6px; margin-top: 18px; align-items: center; }
.dlabel { text-align: right; }
.dfield { height: 20px; line-height: 18px; padding-left: 3px; background: #fff; border: 1px solid #c4c4c4; font-size: 14px; }
.dfield.focus { border: 1px solid #8fbcec; outline: 2px solid #98c2f0; outline-offset: 0; }
.sel { background: #ffd9ae; color: inherit; }
.dexpand { display: flex; width: 20px; height: 20px; align-items: center; justify-content: center; background: #fff; border: 1px solid #c8c8c8; border-radius: 4px; }
.dexpand .chev { color: #333; }
.dpopup { position: relative; display: flex; align-items: center; gap: 4px; height: 21px; padding-left: 8px; background: #fff; border: 1px solid #c8c8c8; border-radius: 4px; white-space: pre; }
.cloud { width: 17px; height: 13px; }
.dgray { color: #8f8f8f; margin-left: -4px; }
.dstep { position: absolute; right: -1px; top: -1px; width: 17px; height: 21px; display: flex; align-items: center; justify-content: center; background: linear-gradient(#4b9cf7, #1a6fe8); border-radius: 0 4px 4px 0; }
.updn { width: 8px; height: 14px; }
.dbtns { display: flex; justify-content: flex-end; gap: 9px; padding: 17px 8px 0 0; }
.dbtn { width: 77px; height: 20px; line-height: 18px; text-align: center; background: #fff; border: 1px solid #c4c4c4; border-radius: 4px; }
.dbtn.primary { width: 78px; color: #fff; border: 0; line-height: 20px; background: linear-gradient(#5aa9fb, #1f7cf4); }
```
